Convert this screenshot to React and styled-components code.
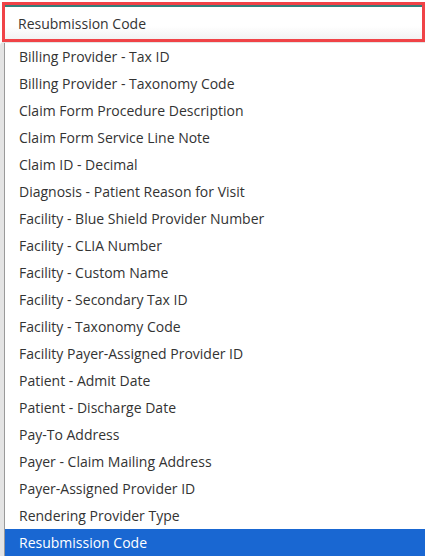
import React from 'react'
import styled, { createGlobalStyle } from 'styled-components'

const options = [
    'Billing Provider - Tax ID',
    'Billing Provider - Taxonomy Code',
    'Claim Form Procedure Description',
    'Claim Form Service Line Note',
    'Claim ID - Decimal',
    'Diagnosis - Patient Reason for Visit',
    'Facility - Blue Shield Provider Number',
    'Facility - CLIA Number',
    'Facility - Custom Name',
    'Facility - Secondary Tax ID',
    'Facility - Taxonomy Code',
    'Facility Payer-Assigned Provider ID',
    'Patient - Admit Date',
    'Patient - Discharge Date',
    'Pay-To Address',
    'Payer - Claim Mailing Address',
    'Payer-Assigned Provider ID',
    'Rendering Provider Type',
    'Resubmission Code',
]

function App() {
    const selected = 'Resubmission Code'
  return (
    <Page>
        <GlobalStyle />
        <Highlight>
            <Field>{selected}</Field>
        </Highlight>
        <List>
            {options.map((opt)=>(
                <Option key={opt} $active={opt===selected}>{opt}</Option>
            ))}
        </List>
    </Page>
  )
}

const GlobalStyle = createGlobalStyle`
    body{
        margin: 0;
        background: #fff;
        font-family: "Open Sans", "Noto Sans", sans-serif;
    }
`
const Page = styled.div`
    width: 425px;
    height: 557px;
    overflow: hidden;
    padding-top: 2px;
    box-sizing: border-box;
`
const Highlight = styled.div`
    margin-left: 2px;
    width: 423px;
    height: 40px;
    border: 3px solid #f04347;
    box-sizing: border-box;
`
const Field = styled.div`
    height: 100%;
    box-sizing: border-box;
    border-top: 2px solid #33807b;
    background: linear-gradient(180deg, #ffffff 60%, #f2f2f2 100%);
    padding-left: 13px;
    padding-top: 1px;
    display: flex;
    align-items: center;
    font-size: 14px;
    color: #333;
`
const List = styled.div`
    border-left: 4px solid #e4e4e4;
    border-top: 1px solid #e4e4e4;
    border-top-left-radius: 4px;
    background: #fff;
`
const Option = styled.div`
    height: 27px;
    line-height: 27px;
    padding-left: 14px;
    font-size: 14px;
    white-space: nowrap;
    border-left: 1px solid #9a9a9a;
    color: ${props=>props.$active ? '#fff' : '#333'};
    background: ${props=>props.$active ? '#1967d2' : '#fff'};
`

export default App
